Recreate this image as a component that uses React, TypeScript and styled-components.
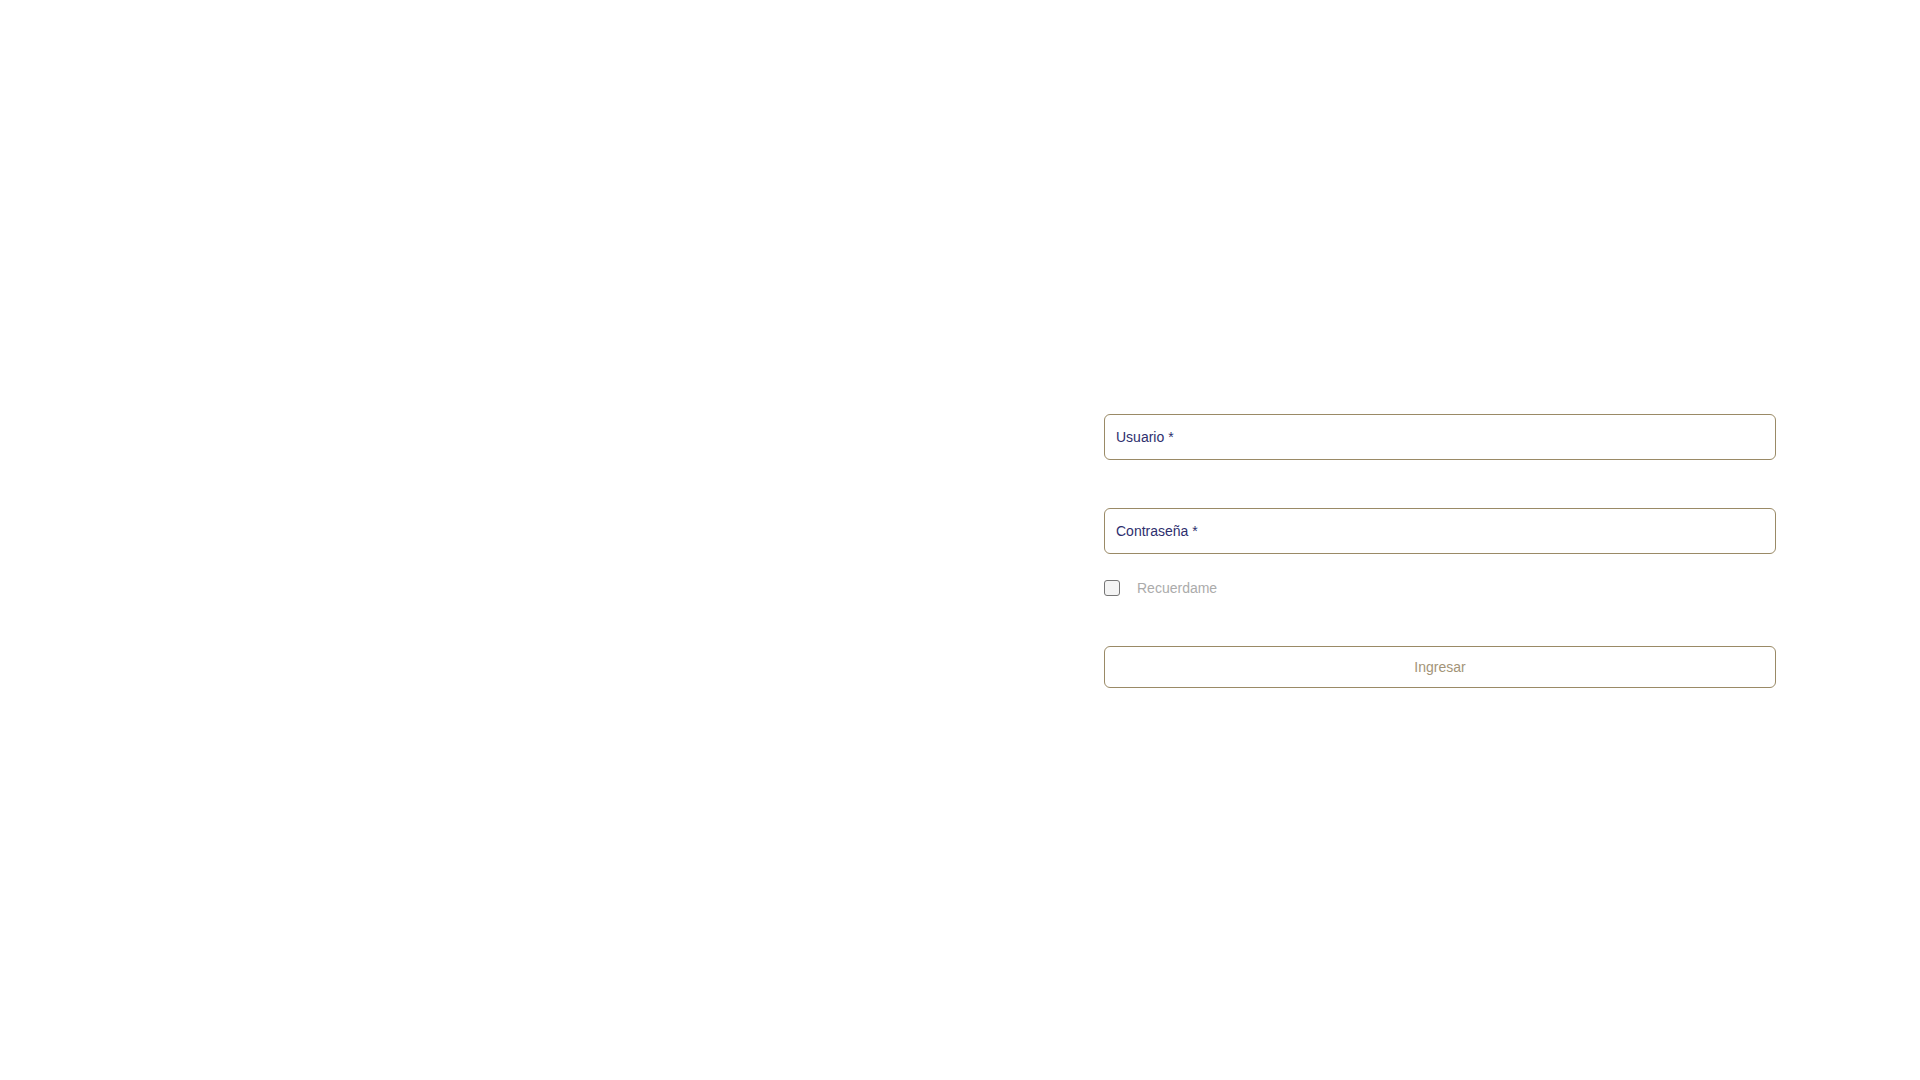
import styled, { createGlobalStyle } from 'styled-components';

const GlobalStyle = createGlobalStyle`
  html, body {
    margin: 0;
    padding: 0;
    background: #fff;
    font-family: "Liberation Sans", Arial, sans-serif;
  }
  * {
    box-sizing: border-box;
  }
`;

const Page = styled.div`
  display: grid;
  grid-template-columns: 1fr 1fr;
  min-height: 100vh;
  width: 100%;
`;

const Side = styled.div`
  min-height: 100vh;
`;

const FormColumn = styled.div`
  display: flex;
  flex-direction: column;
  justify-content: center;
  align-items: center;
  padding-top: 22px;
`;

const Form = styled.form`
  display: flex;
  flex-direction: column;
  width: 672px;
`;

const Field = styled.input<{ $gap?: number }>`
  height: 46px;
  width: 100%;
  padding: 0 11px;
  margin-top: ${(p) => p.$gap ?? 0}px;
  border: 1px solid #9a8a66;
  border-radius: 6px;
  font-family: "Liberation Sans", Arial, sans-serif;
  font-size: 14px;
  color: #2e2f6e;
  background: #fff;
  outline: none;

  &::placeholder {
    color: #2e2f6e;
    opacity: 1;
  }
`;

const CheckRow = styled.label`
  display: flex;
  align-items: center;
  gap: 17px;
  margin-top: 26px;
  height: 16px;
  cursor: pointer;
`;

const Box = styled.span`
  width: 16px;
  height: 16px;
  border: 1px solid #767676;
  border-radius: 3px;
  background: #f4f4f4;
  flex-shrink: 0;
`;

const CheckText = styled.span`
  font-size: 14px;
  color: #ababab;
`;

const Submit = styled.button`
  margin-top: 50px;
  height: 42px;
  width: 100%;
  border: 1px solid #9a8a66;
  border-radius: 6px;
  background: #fff;
  color: #a39478;
  font-family: "Liberation Sans", Arial, sans-serif;
  font-size: 14px;
  cursor: pointer;
`;

export default function App() {
  return (
    <>
      <GlobalStyle />
      <Page>
        <Side />
        <FormColumn>
          <Form onSubmit={(e) => e.preventDefault()}>
            <Field type="text" placeholder="Usuario *" />
            <Field type="password" placeholder="Contraseña *" $gap={48} />
            <CheckRow>
              <Box />
              <CheckText>Recuerdame</CheckText>
            </CheckRow>
            <Submit type="submit">Ingresar</Submit>
          </Form>
        </FormColumn>
      </Page>
    </>
  );
}
